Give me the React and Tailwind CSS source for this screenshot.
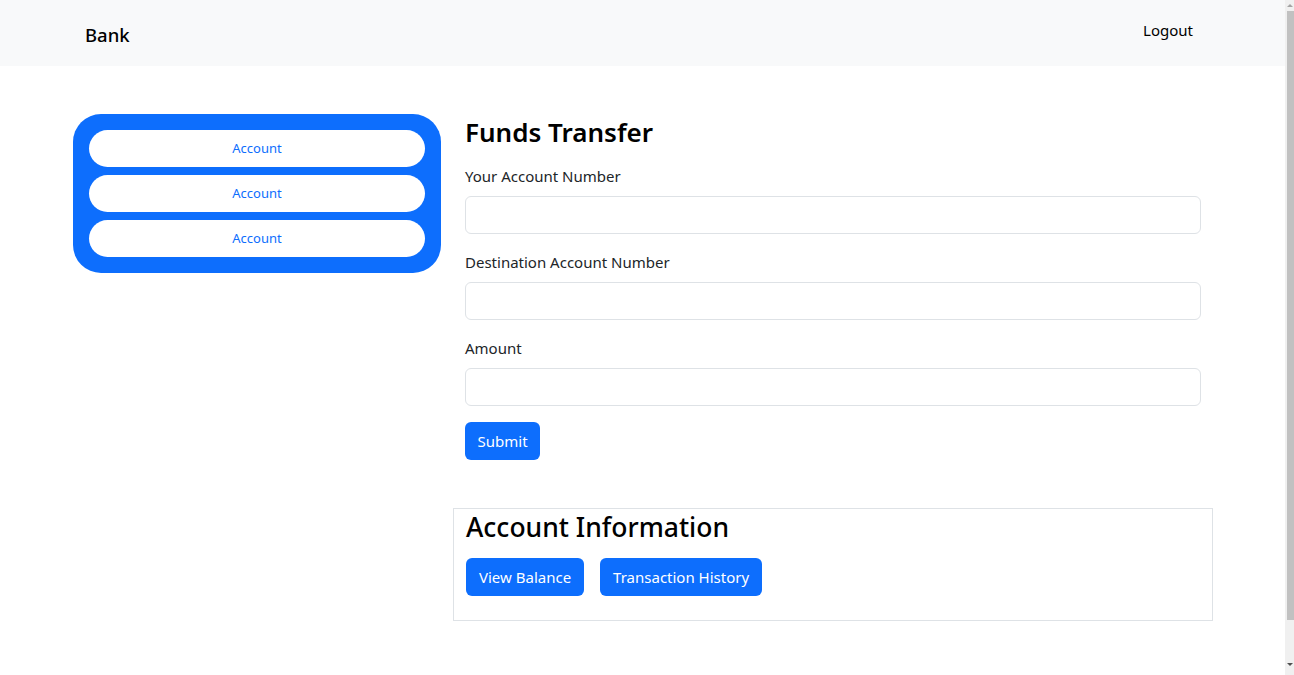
export default function App() {
  const font = { fontFamily: '"Segoe UI", "Noto Sans", "Liberation Sans", sans-serif' };
  return (
    <div className="flex h-[675px] w-[1294px] overflow-hidden bg-white text-[#212529]" style={font}>
      <div className="flex-1 flex flex-col">
        <nav className="h-[66px] bg-[#f8f9fa] flex items-center">
          <div className="w-full flex items-center justify-between pl-[85px] pr-[92px]">
            <span className="text-[18.5px] font-medium text-black mt-[3px]">Bank</span>
            <span className="text-[15px] text-black mb-[5px]">Logout</span>
          </div>
        </nav>
        <div className="flex pl-[73px] pt-[48px]">
          <div className="w-[368px] shrink-0">
            <div className="bg-[#0d6efd] rounded-[28px] p-4 flex flex-col gap-2">
              {["Account", "Account", "Account"].map((t, i) => (
                <button key={i} className="h-[37px] bg-white rounded-full text-[13px] text-[#0d6efd] pt-[1px]">
                  {t}
                </button>
              ))}
            </div>
          </div>
          <div className="w-[760px] ml-[12px] flex flex-col">
            <div className="pl-[12px] pr-[12px]">
              <h3 className="text-[26px] font-semibold text-black leading-[34px] mt-[1px] mb-[15px]">Funds Transfer</h3>
              <div className="flex flex-col">
                <label className="text-[15px] leading-6 mb-[8px]">Your Account Number</label>
                <div className="h-[38px] border border-[#dee2e6] rounded-[6px] mb-[16px]"></div>
                <label className="text-[15px] leading-6 mb-[8px]">Destination Account Number</label>
                <div className="h-[38px] border border-[#dee2e6] rounded-[6px] mb-[16px]"></div>
                <label className="text-[15px] leading-6 mb-[8px]">Amount</label>
                <div className="h-[38px] border border-[#dee2e6] rounded-[6px] mb-[16px]"></div>
                <div>
                  <button className="h-[38px] px-[12.5px] bg-[#0d6efd] text-white rounded-[6px] text-[15px]">Submit</button>
                </div>
              </div>
            </div>
            <div className="mt-[48px] border border-[#dee2e6] h-[113px] px-[12px]">
              <h2 className="text-[26.5px] font-medium text-black leading-[34px] mt-[1px] mb-[14px]">Account Information</h2>
              <div className="flex gap-4">
                <button className="h-[38px] px-[13px] bg-[#0d6efd] text-white rounded-[6px] text-[15px]">View Balance</button>
                <button className="h-[38px] px-[13px] bg-[#0d6efd] text-white rounded-[6px] text-[15px]">Transaction History</button>
              </div>
            </div>
          </div>
        </div>
      </div>
      <div className="w-[9px] bg-[#f0f0f0] flex flex-col items-end">
        <div className="h-[11px] w-full flex items-center justify-end pr-[1px]">
          <div className="w-0 h-0 border-l-[3px] border-r-[3px] border-b-[3px] border-l-transparent border-r-transparent border-b-[#a3a3a3]"></div>
        </div>
        <div className="w-[7px] h-[609px] bg-[#c1c1c1]"></div>
        <div className="flex-1 w-full flex items-end justify-end pr-[1px] pb-[9px]">
          <div className="w-0 h-0 border-l-[3px] border-r-[3px] border-t-[3px] border-l-transparent border-r-transparent border-t-[#505050]"></div>
        </div>
      </div>
    </div>
  );
}
